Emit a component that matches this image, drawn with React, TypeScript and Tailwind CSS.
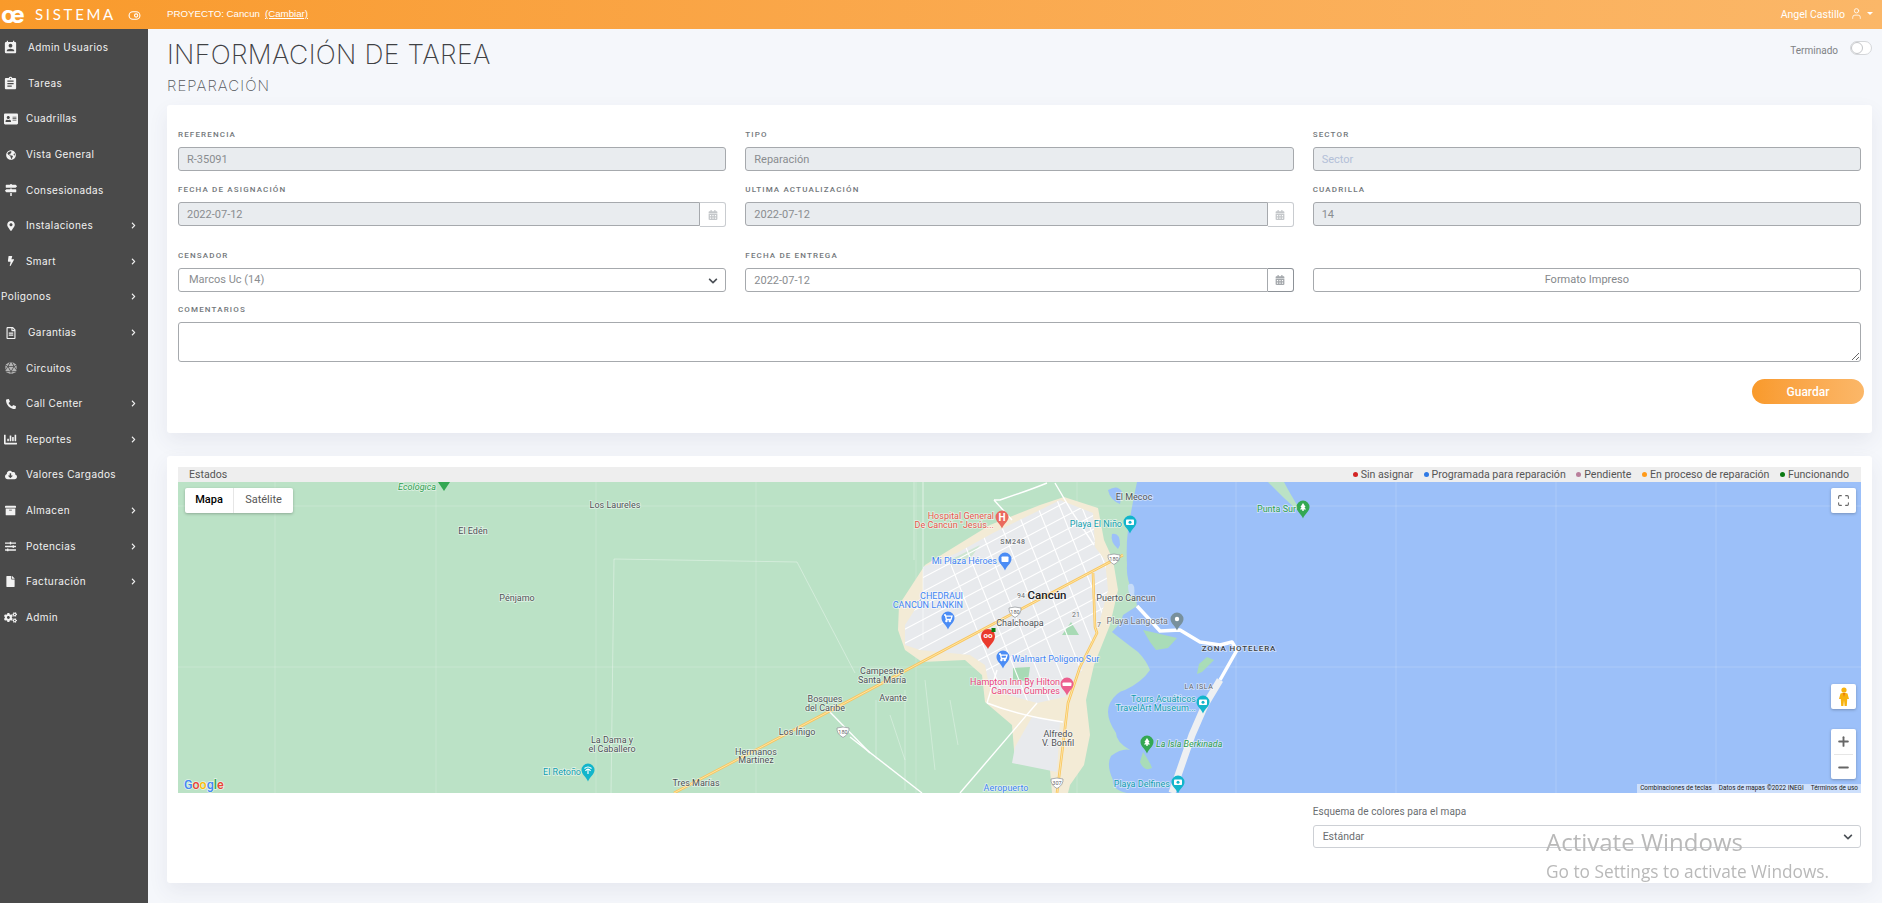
import React from 'react';
import { ToggleRight, User, Maximize, Plus, Minus } from 'lucide-react';
import {
  MdPermContactCalendar,
  MdAssignment,
} from 'react-icons/md';
import {
  FaAddressCard,
  FaGlobeAmericas,
  FaMapSigns,
  FaMapMarkerAlt,
  FaBolt,
  FaRegFileAlt,
  FaDiceD20,
  FaPhoneAlt,
  FaChartBar,
  FaCloudDownloadAlt,
  FaArchive,
  FaSlidersH,
  FaFile,
  FaCogs,
  FaChevronRight,
  FaChevronDown,
  FaCalendarAlt,
} from 'react-icons/fa';

const menu = [
  { label: 'Admin Usuarios', icon: MdPermContactCalendar, size: 15, wide: true },
  { label: 'Tareas', icon: MdAssignment, size: 15, wide: true },
  { label: 'Cuadrillas', icon: FaAddressCard, size: 14 },
  { label: 'Vista General', icon: FaGlobeAmericas, size: 10 },
  { label: 'Consesionadas', icon: FaMapSigns, size: 12 },
  { label: 'Instalaciones', icon: FaMapMarkerAlt, size: 10, arrow: true },
  { label: 'Smart', icon: FaBolt, size: 10, arrow: true },
  { label: 'Poligonos', arrow: true },
  { label: 'Garantias', icon: FaRegFileAlt, size: 12, wide: true, arrow: true },
  { label: 'Circuitos', icon: FaDiceD20, size: 12, muted: true },
  { label: 'Call Center', icon: FaPhoneAlt, size: 10, arrow: true },
  { label: 'Reportes', icon: FaChartBar, size: 13, arrow: true },
  { label: 'Valores Cargados', icon: FaCloudDownloadAlt, size: 12 },
  { label: 'Almacen', icon: FaArchive, size: 11, arrow: true },
  { label: 'Potencias', icon: FaSlidersH, size: 11, arrow: true },
  { label: 'Facturación', icon: FaFile, size: 11, arrow: true },
  { label: 'Admin', icon: FaCogs, size: 13 },
];

const legend = [
  { label: 'Sin asignar', color: 'bg-[#d32424]' },
  { label: 'Programada para reparación', color: 'bg-[#2f7ae5]' },
  { label: 'Pendiente', color: 'bg-[#b97f9b]' },
  { label: 'En proceso de reparación', color: 'bg-[#ff9a1a]' },
  { label: 'Funcionando', color: 'bg-[#0b7a12]' },
];

const Label = ({ children }: { children: React.ReactNode }) => (
  <div className="h-[12px] mb-[7px] pt-[1px] text-[8px] leading-[12px] font-medium uppercase tracking-[1.15px] text-[#72777b]">{children}</div>
);

const inputBase = 'block w-full h-[24px] px-[8px] text-[11px] text-[#8a8d90] border border-[#a6a9ad] rounded-[3px] outline-none placeholder:text-[#b3c0d8]';

const TextField = ({ label, value, placeholder }: { label: string; value?: string; placeholder?: string }) => (
  <div>
    <Label>{label}</Label>
    <input readOnly value={value ?? ''} placeholder={placeholder} className={`${inputBase} bg-[#e9ecef]`} />
  </div>
);

const DateField = ({ label, value, disabled }: { label: string; value: string; disabled?: boolean }) => (
  <div>
    <Label>{label}</Label>
    <div className="flex items-start">
      <input readOnly value={value} className={`${inputBase} flex-1 min-w-0 rounded-r-none ${disabled ? 'bg-[#e9ecef]' : 'bg-white'}`} />
      <div className={`w-[26px] shrink-0 flex items-center justify-center rounded-r-[3px] border border-l-0 ${disabled ? 'h-[25px] border-[#c9ccd0] text-[#c4c7ca]' : 'h-[24px] border-[#8d9298] border-l text-[#a4a8ac]'}`}>
        <FaCalendarAlt size={10} />
      </div>
    </div>
  </div>
);

// calles de la ciudad, se recortan con el poligono urbano
const streetsNE = Array.from({ length: 11 }, (_, i) => {
  const off = (i - 3) * 14;
  return `M860 ${695 - off} L1130 ${552 - off}`;
});
const streetsSE = Array.from({ length: 10 }, (_, i) => {
  const x = 925 + i * 22;
  return `M${x} 500 L${x + 92} 730`;
});

const waterPath =
  'M1137 482 L1861 482 L1861 793 L1127 793 Q1112 790 1113 780 Q1106 765 1111 756 Q1122 748 1130 750 Q1116 742 1116 733 Q1104 715 1110 703 Q1116 692 1125 690 Q1142 682 1150 670 Q1146 660 1138 652 Q1122 640 1112 632 Q1122 622 1123 615 L1137 606 Q1136 596 1132 590 Q1126 578 1127 565 Q1126 545 1128 530 Q1132 505 1137 482 Z';

const urbanPath =
  'M923 567 L957 553 L993 533 L1040 510 L1060 500 L1093 513 L1095 547 L1105 560 L1108 590 L1100 620 L1085 665 L1065 697 L1037 703 L990 690 L985 665 L970 655 L920 650 L905 645 L905 625 L923 597 Z';

type PinProps = { x: number; y: number; color: string; glyph?: string };

const Pin = ({ x, y, color, glyph }: PinProps) => (
  <g transform={`translate(${x} ${y})`}>
    <path d="M0 11.5 C-1.5 7 -6.5 4.5 -6.5 0 A6.5 6.5 0 1 1 6.5 0 C6.5 4.5 1.5 7 0 11.5 Z" fill={color} />
    {glyph === 'H' && (
      <text x="0" y="3.5" textAnchor="middle" fontSize="10" fontWeight="700" fill="#fff">H</text>
    )}
    {glyph === 'box' && <rect x="-3.5" y="-2.5" width="7" height="5.5" rx="0.8" fill="#fff" />}
    {glyph === 'cart' && <path d="M-4 -3 L-2.6 -3 L-1.6 1.5 L3 1.5 L4 -1.8 L-2 -1.8 M-1 3 A0.6 0.6 0 1 0 -1 3.01 M2.4 3 A0.6 0.6 0 1 0 2.4 3.01" stroke="#fff" strokeWidth="1.3" fill="none" />}
    {glyph === 'camera' && (
      <g>
        <rect x="-4" y="-2.5" width="8" height="5.5" rx="0.8" fill="#fff" />
        <circle cx="0" cy="0.2" r="1.5" fill={color} />
      </g>
    )}
    {glyph === 'tree' && <path d="M0 -4 L2.6 0 L1.4 0 L3 2.6 L0.7 2.6 L0.7 4 L-0.7 4 L-0.7 2.6 L-3 2.6 L-1.4 0 L-2.6 0 Z" fill="#fff" />}
    {glyph === 'bed' && <rect x="-4.5" y="-1.5" width="9" height="3.5" rx="0.8" fill="#fff" />}
    {glyph === 'dot' && <circle cx="0" cy="0" r="2.2" fill="#fff" />}
    {glyph === 'palm' && <path d="M0 4 L0 -1 M-3.5 -1.5 Q0 -4.5 3.5 -1.5 M-2.5 1 Q0 -3 2.5 1" stroke="#fff" strokeWidth="1.2" fill="none" />}
  </g>
);

const pins: PinProps[] = [
  { x: 1002, y: 517, color: '#ea6a5e', glyph: 'H' },
  { x: 1005, y: 559, color: '#4b8cf5', glyph: 'box' },
  { x: 948, y: 618, color: '#4b8cf5', glyph: 'cart' },
  { x: 1003, y: 657, color: '#4b8cf5', glyph: 'cart' },
  { x: 1067, y: 684, color: '#ec5f8f', glyph: 'bed' },
  { x: 1130, y: 522, color: '#12b5cb', glyph: 'camera' },
  { x: 1303, y: 507, color: '#34a853', glyph: 'tree' },
  { x: 1177, y: 619, color: '#78909c', glyph: 'dot' },
  { x: 1203, y: 702, color: '#12b5cb', glyph: 'camera' },
  { x: 1147, y: 742, color: '#34a853', glyph: 'tree' },
  { x: 1178, y: 782, color: '#12b5cb', glyph: 'camera' },
  { x: 588, y: 770, color: '#12b5cb', glyph: 'palm' },
];

type MapLabel = { x: number; y: number; t: string; c?: string; a?: 'start' | 'middle' | 'end'; s?: number; w?: number; i?: boolean; ls?: number };

const DARK = '#4f5357';
const BLUE = '#4285f4';
const TEAL = '#129eaf';
const RED = '#e8584c';
const PINK = '#e8457c';
const GREEN = '#2e9e4f';

const mapLabels: MapLabel[] = [
  { x: 436, y: 490, t: 'Ecológica', c: GREEN, a: 'end', i: true },
  { x: 615, y: 508, t: 'Los Laureles', c: DARK, a: 'middle' },
  { x: 473, y: 534, t: 'El Edén', c: DARK, a: 'middle' },
  { x: 517, y: 601, t: 'Pénjamo', c: DARK, a: 'middle' },
  { x: 612, y: 743, t: 'La Dama y', c: DARK, a: 'middle' },
  { x: 612, y: 752, t: 'el Caballero', c: DARK, a: 'middle' },
  { x: 581, y: 775, t: 'El Retoño', c: TEAL, a: 'end' },
  { x: 696, y: 786, t: 'Tres Marías', c: DARK, a: 'middle' },
  { x: 756, y: 755, t: 'Hermanos', c: DARK, a: 'middle' },
  { x: 756, y: 763, t: 'Martínez', c: DARK, a: 'middle' },
  { x: 797, y: 735, t: 'Los Íñigo', c: DARK, a: 'middle' },
  { x: 825, y: 702, t: 'Bosques', c: DARK, a: 'middle' },
  { x: 825, y: 711, t: 'del Caribe', c: DARK, a: 'middle' },
  { x: 882, y: 674, t: 'Campestre', c: DARK, a: 'middle' },
  { x: 882, y: 683, t: 'Santa María', c: DARK, a: 'middle' },
  { x: 893, y: 701, t: 'Avante', c: DARK, a: 'middle' },
  { x: 994, y: 519, t: 'Hospital General', c: RED, a: 'end' },
  { x: 994, y: 528, t: 'De Cancún "Jesús...', c: RED, a: 'end' },
  { x: 1013, y: 544, t: 'SM248', c: '#6b6f73', a: 'middle', s: 7, w: 500, ls: 0.6 },
  { x: 997, y: 564, t: 'Mi Plaza Héroes', c: BLUE, a: 'end' },
  { x: 963, y: 599, t: 'CHEDRAUI', c: BLUE, a: 'end' },
  { x: 963, y: 608, t: 'CANCÚN LANKIN', c: BLUE, a: 'end' },
  { x: 1021, y: 598, t: '94', c: '#6b6f73', a: 'middle', s: 7 },
  { x: 1047, y: 599, t: 'Cancún', c: '#202124', a: 'middle', s: 11.5, w: 500 },
  { x: 1126, y: 601, t: 'Puerto Cancun', c: DARK, a: 'middle' },
  { x: 1020, y: 626, t: 'Chalchoapa', c: DARK, a: 'middle' },
  { x: 1076, y: 617, t: '21', c: '#6b6f73', a: 'middle', s: 7 },
  { x: 1099, y: 627, t: '7', c: '#6b6f73', a: 'middle', s: 7 },
  { x: 1168, y: 624, t: 'Playa Langosta', c: '#70757a', a: 'end' },
  { x: 1012, y: 662, t: 'Walmart Polígono Sur', c: BLUE },
  { x: 1060, y: 685, t: 'Hampton Inn By Hilton', c: PINK, a: 'end' },
  { x: 1060, y: 694, t: 'Cancun Cumbres', c: PINK, a: 'end' },
  { x: 1239, y: 651, t: 'ZONA HOTELERA', c: '#3c4043', a: 'middle', s: 8, w: 500, ls: 0.9 },
  { x: 1199, y: 689, t: 'LA ISLA', c: '#5f6368', a: 'middle', s: 7, ls: 0.6 },
  { x: 1196, y: 702, t: 'Tours Acuáticos', c: TEAL, a: 'end' },
  { x: 1196, y: 711, t: 'TravelArt Museum...', c: TEAL, a: 'end' },
  { x: 1156, y: 747, t: 'La Isla Berkinada', c: GREEN, i: true },
  { x: 1170, y: 787, t: 'Playa Delfines', c: TEAL, a: 'end' },
  { x: 1006, y: 791, t: 'Aeropuerto', c: BLUE, a: 'middle' },
  { x: 1058, y: 737, t: 'Alfredo', c: DARK, a: 'middle' },
  { x: 1058, y: 746, t: 'V. Bonfil', c: DARK, a: 'middle' },
  { x: 1134, y: 500, t: 'El Mecoc', c: DARK, a: 'middle' },
  { x: 1122, y: 527, t: 'Playa El Niño', c: TEAL, a: 'end' },
  { x: 1296, y: 512, t: 'Punta Sur', c: GREEN, a: 'end' },
];

const Shield = ({ x, y, n }: { x: number; y: number; n: string }) => (
  <g transform={`translate(${x} ${y})`}>
    <path d="M-6 -4 Q0 -6 6 -4 Q6.5 2 0 5.5 Q-6.5 2 -6 -4 Z" fill="#fff" stroke="#8a8e92" strokeWidth="0.7" />
    <text x="0" y="1.8" textAnchor="middle" fontSize="5.5" fill="#5f6368">{n}</text>
  </g>
);

const MapDrawing = () => (
  <svg viewBox="178 482 1683 311" className="block w-full h-full font-[Roboto,sans-serif]">
    <defs>
      <clipPath id="urban">
        <path d={urbanPath} />
      </clipPath>
    </defs>
    <rect x="178" y="482" width="1683" height="311" fill="#bbe2c6" />
    <path d={waterPath} fill="#9cc0f9" />
    <path d="M1268 482 L1284 482 Q1290 494 1304 516 Q1285 500 1268 482 Z" fill="#bbe2c6" />
    <path d="M1108 490 Q1118 484 1122 492 L1120 504 Q1110 500 1108 490 Z" fill="#9cc0f9" />
    <path d="M1112 534 Q1120 532 1120 545 L1118 549 Q1110 542 1112 534 Z" fill="#9cc0f9" />

    {/* cuadricula de mosaicos */}
    {[275, 436, 596, 756, 916, 1077, 1236, 1396, 1556, 1716].map((x) => (
      <line key={x} x1={x} y1="482" x2={x} y2="793" stroke="#fff" strokeOpacity="0.18" />
    ))}
    {[506, 667].map((y) => (
      <line key={y} x1="178" y1={y} x2="1861" y2={y} stroke="#fff" strokeOpacity="0.18" />
    ))}

    {/* zona costera beige */}
    <path d="M899 605 L925 565 L990 525 L1040 505 L1064 497 L1098 508 L1104 540 L1113 560 L1118 590 L1110 625 L1094 665 L1086 700 L1090 735 L1084 765 L1070 785 L1068 793 L1052 793 L1050 770 L1015 762 L1012 725 L985 702 L982 675 L965 660 L922 662 L905 650 L898 630 Z" fill="#f3ebd6" />
    <path d={urbanPath} fill="#e8eaed" />
    <path d="M1032 717 L1060 722 L1057 772 L1012 763 L1015 747 Z" fill="#e8eaed" />
    <path d="M1013 668 L1030 667 L1028 681 L1013 680 Z" fill="#a8dab5" />
    <path d="M1071 622 L1079 635 L1062 635 Z" fill="#a8dab5" />
    <path d="M950 560 L980 545 L972 556 L950 566 Z" fill="#cfe6d2" />

    <g clipPath="url(#urban)" stroke="#fff" strokeWidth="1.1" fill="none">
      {streetsNE.map((d) => <path key={d} d={d} />)}
      {streetsSE.map((d) => <path key={d} d={d} />)}
    </g>

    {/* islas y barra hotelera */}
    <path d="M1143 630 L1160 634 L1177 638 L1168 648 L1156 650 L1150 642 Z" fill="#a9dcb8" />
    <path d="M1207 657 L1214 660 L1202 672 L1197 674 L1199 664 Z" fill="#a9dcb8" />
    <path d="M1143 752 Q1150 762 1152 768 Q1144 772 1140 762 Z" fill="#a9dcb8" />
    <path d="M1128 585 Q1136 580 1134 596 Q1128 598 1128 585 Z" fill="#c7dcf8" />
    <path d="M1137 606 L1150 620 L1160 631 L1180 630 L1200 642 L1220 645 L1232 642 L1237 650 L1220 680" stroke="#fff" strokeWidth="3.5" fill="none" strokeLinejoin="round" />
    <path d="M1220 680 L1205 705 L1192 735 L1172 793" stroke="#eef0f2" strokeWidth="7" fill="none" />

    {/* caminos blancos */}
    <g stroke="#fff" fill="none">
      <path d="M826 708 L870 753" strokeWidth="1.4" />
      <path d="M850 737 L922 793" strokeWidth="1.4" />
      <path d="M960 793 L1037 703" strokeWidth="1.4" />
      <path d="M987 703 Q1020 716 1063 722" strokeWidth="1.4" />
      <path d="M987 703 L997 670" strokeWidth="1.4" />
      <path d="M994 500 L1000 500 Q1030 490 1047 483" strokeWidth="1.4" />
      <path d="M994 500 L1012 520" strokeWidth="1.4" />
      <path d="M1055 483 L1072 512 L1094 545" strokeWidth="1.4" />
      <path d="M923 482 L923 640" strokeWidth="0.8" strokeOpacity="0.7" />
      <path d="M914 482 L914 560" strokeWidth="0.7" strokeOpacity="0.5" />
      <path d="M614 559 L797 562 L855 673" strokeWidth="0.7" strokeOpacity="0.5" />
      <path d="M614 559 L611 793" strokeWidth="0.7" strokeOpacity="0.5" />
      <path d="M905 690 L905 790 M876 700 L876 760 M890 715 L905 760 M925 680 L935 770 M950 700 L958 745" strokeWidth="0.7" strokeOpacity="0.45" />
    </g>

    {/* carreteras */}
    <g fill="none" strokeLinejoin="round">
      <path d="M674 793 L826 713 L963 640 L1123 555" stroke="#f9c65e" strokeWidth="2.6" />
      <path d="M674 793 L826 713 L963 640 L1123 555" stroke="#fff0c4" strokeWidth="0.7" />
      <path d="M1093 573 L1095 627 L1097 633 L1080 667 L1068 703 L1062 753 L1057 793" stroke="#f9c65e" strokeWidth="2.6" />
      <path d="M1093 573 L1095 627 L1097 633 L1080 667 L1068 703 L1062 753 L1057 793" stroke="#fff0c4" strokeWidth="0.7" />
    </g>
    <Shield x={1114} y={559} n="180" />
    <Shield x={1015} y={612} n="180" />
    <Shield x={1057} y={783} n="307" />
    <Shield x={843} y={732} n="180" />

    <polygon points="438,482 450,482 444,491" fill="#34a853" />
    {pins.map((p) => <Pin key={`${p.x}-${p.y}`} {...p} />)}

    {/* marcador de la tarea */}
    <g transform="translate(988 637)">
      <path d="M0 12 C-1.5 8 -7 5 -7 -1 A7 7 0 1 1 7 -1 C7 5 1.5 8 0 12 Z" fill="#ea3a2d" />
      <text x="0" y="1" textAnchor="middle" fontSize="8" fontWeight="700" fill="#fff">oo</text>
      <rect x="3.5" y="-9" width="4" height="4" fill="#0b7a12" />
    </g>

    {mapLabels.map((l) => (
      <text
        key={l.t}
        x={l.x}
        y={l.y}
        textAnchor={l.a ?? 'start'}
        fontSize={l.s ?? 9}
        fontWeight={l.w ?? 400}
        fontStyle={l.i ? 'italic' : 'normal'}
        letterSpacing={l.ls ?? 0}
        fill={l.c}
        stroke="#ffffff"
        strokeOpacity="0.55"
        strokeWidth="1.6"
        paintOrder="stroke"
      >
        {l.t}
      </text>
    ))}

    <text x="184" y="789" fontSize="12.5" fontWeight="500" stroke="#fff" strokeOpacity="0.6" strokeWidth="1.5" paintOrder="stroke">
      <tspan fill="#4285f4">G</tspan>
      <tspan fill="#ea4335">o</tspan>
      <tspan fill="#fbbc05">o</tspan>
      <tspan fill="#4285f4">g</tspan>
      <tspan fill="#34a853">l</tspan>
      <tspan fill="#ea4335">e</tspan>
    </text>
  </svg>
);

const App = () => {
  return (
    <div className="h-[903px] w-full overflow-hidden flex flex-col bg-[#f5f7fb] font-[Roboto,sans-serif]">
      <header className="h-[29px] shrink-0 flex items-center text-white bg-gradient-to-r from-[#f99a2a] to-[#fbb768]">
        <div className="w-[167px] shrink-0 flex items-center">
          <span className="w-[35px] pl-[1px] text-[24px] leading-[24px] font-bold tracking-[-1px] font-[Inter,sans-serif]">œ</span>
          <span className="text-[15px] font-normal tracking-[2.7px] font-[Lato,sans-serif]">SISTEMA</span>
          <ToggleRight size={13} className="ml-[12px] mt-[2px]" />
        </div>
        <div className="text-[9.7px] font-['Liberation_Sans',sans-serif]">PROYECTO: Cancun</div>
        <a className="ml-[5px] text-[9.7px] underline font-['Liberation_Sans',sans-serif]">(Cambiar)</a>
        <div className="ml-auto flex items-center pr-[9px]">
          <span className="text-[10.5px]">Angel Castillo</span>
          <User size={13} className="ml-[5px] mb-[2px]" strokeWidth={1.5} />
          <span className="ml-[4px] mb-[3px] w-0 h-0 border-x-[3px] border-x-transparent border-t-[3px] border-t-white" />
        </div>
      </header>

      <div className="flex-1 flex min-h-0">
        <aside className="w-[148px] shrink-0 bg-[#4a4a4a] pt-[1px] text-white font-[Inter,sans-serif]">
          {menu.map((m) => {
            const Icon = m.icon;
            return (
              <div key={m.label} className="h-[35.6px] flex items-center text-[10px] tracking-[0.4px] text-[#f2f2f2]">
                {Icon ? (
                  <span className={`w-[21px] flex justify-center shrink-0 ${m.muted ? 'text-[#b5b5b5]' : ''}`}>
                    <Icon size={m.size} />
                  </span>
                ) : (
                  <span className="w-[1px] shrink-0" />
                )}
                <span className={Icon ? (m.wide ? 'ml-[7px]' : 'ml-[5px]') : ''}>{m.label}</span>
                {m.arrow && <FaChevronRight size={7} className="ml-auto mr-[11px]" />}
              </div>
            );
          })}
        </aside>

        <main className="flex-1 min-w-0 pl-[19px] pr-[10px]">
          <div className="flex justify-between pt-[9px] mb-[10px]">
            <div>
              <h1 className="text-[26.5px] leading-[32px] font-extralight tracking-[0.35px] text-[#3f4144] font-[Inter,sans-serif]">INFORMACIÓN DE TAREA</h1>
              <h2 className="mt-[7px] text-[15px] leading-[18px] font-extralight tracking-[1.05px] text-[#55585c] font-[Inter,sans-serif]">REPARACIÓN</h2>
            </div>
            <div className="flex items-center h-[24px]">
              <span className="text-[10px] text-[#7f8285] mt-[1px]">Terminado</span>
              <div className="relative ml-[12px] w-[22px] h-[14px] rounded-full border border-[#d5d7da] bg-white mb-[5px]">
                <div className="absolute left-0 top-0 w-[12px] h-[12px] rounded-full bg-white border border-[#c4c6c9]" />
              </div>
            </div>
          </div>

          <section className="bg-white rounded-[3px] h-[328px] pt-[23px] px-[11px] shadow-[0_8px_20px_rgba(60,70,100,0.08)]">
            <div className="grid grid-cols-3 gap-x-[19px]">
              <div className="mb-[12px]"><TextField label="Referencia" value="R-35091" /></div>
              <div className="mb-[12px]"><TextField label="Tipo" value="Reparación" /></div>
              <div className="mb-[12px]"><TextField label="Sector" placeholder="Sector" /></div>
              <div className="mb-[22px]"><DateField label="Fecha de asignación" value="2022-07-12" disabled /></div>
              <div className="mb-[22px]"><DateField label="Ultima actualización" value="2022-07-12" disabled /></div>
              <div className="mb-[22px]"><TextField label="Cuadrilla" value="14" /></div>
              <div className="mb-[11px]">
                <Label>Censador</Label>
                <div className="relative">
                  <select className={`${inputBase} appearance-none bg-white pl-[10px]`} defaultValue="14">
                    <option value="14">Marcos Uc (14)</option>
                  </select>
                  <FaChevronDown size={10} className="absolute right-[8px] top-[8px] text-[#4a4f55]" />
                </div>
              </div>
              <div className="mb-[11px]"><DateField label="Fecha de entrega" value="2022-07-12" /></div>
              <div className="mb-[11px] pt-[19px]">
                <button className="block w-full h-[24px] text-[11px] text-[#85888b] bg-white border border-[#a6a9ad] rounded-[3px]">Formato Impreso</button>
              </div>
            </div>
            <Label>Comentarios</Label>
            <textarea className="block w-full h-[40px] border border-[#a6a9ad] rounded-[3px] outline-none bg-white" />
            <div className="flex justify-end mt-[17px]">
              <button className="w-[112px] h-[25px] -mr-[3px] rounded-full text-white text-[12px] font-medium bg-gradient-to-r from-[#f99a2a] to-[#fbb768]">Guardar</button>
            </div>
          </section>

          <section className="mt-[23px] bg-white rounded-[3px] h-[427px] pt-[11px] px-[11px] shadow-[0_8px_20px_rgba(60,70,100,0.08)]">
            <div className="h-[15px] flex items-center justify-between pl-[11px] pr-[12px] bg-[#eeeeee] text-[10.6px] text-[#555]">
              <span>Estados</span>
              <div className="flex items-center gap-[10.5px]">
                {legend.map((l) => (
                  <span key={l.label} className="flex items-center gap-[3px]">
                    <span className={`w-[5px] h-[5px] rounded-full ${l.color}`} />
                    {l.label}
                  </span>
                ))}
              </div>
            </div>

            <div className="relative h-[311px] overflow-hidden">
              <MapDrawing />
              <div className="absolute left-[7px] top-[6px] h-[25px] flex bg-white rounded-[2px] shadow-[0_1px_3px_rgba(0,0,0,0.25)] text-[11px]">
                <span className="w-[49px] flex items-center justify-center text-black font-medium border-r border-[#e6e6e6]">Mapa</span>
                <span className="w-[59px] flex items-center justify-center text-[#565656]">Satélite</span>
              </div>
              <div className="absolute right-[5px] top-[6px] w-[25px] h-[25px] bg-white rounded-[2px] shadow-[0_1px_3px_rgba(0,0,0,0.25)] flex items-center justify-center text-[#666]">
                <Maximize size={13} strokeWidth={2} />
              </div>
              <div className="absolute right-[5px] top-[202px] w-[25px] h-[25px] bg-white rounded-[2px] shadow-[0_1px_3px_rgba(0,0,0,0.25)] flex items-center justify-center">
                <svg width="12" height="20" viewBox="0 0 12 20">
                  <circle cx="6" cy="3" r="2.6" fill="#f7b20f" />
                  <path d="M2.5 6.5 Q6 5 9.5 6.5 L11 12 L9.2 12 L8.8 19 L6.6 19 L6 13 L5.4 19 L3.2 19 L2.8 12 L1 12 Z" fill="#f7b20f" />
                  <path d="M5 6 L6 10 L7 6 Z" fill="#e8710a" />
                </svg>
              </div>
              <div className="absolute right-[5px] top-[247px] w-[25px] h-[50px] bg-white rounded-[2px] shadow-[0_1px_3px_rgba(0,0,0,0.25)] flex flex-col items-center text-[#666]">
                <div className="h-[25px] flex items-center"><Plus size={15} strokeWidth={3} /></div>
                <div className="w-[19px] h-[1px] bg-[#e6e6e6]" />
                <div className="h-[24px] flex items-center"><Minus size={15} strokeWidth={3} /></div>
              </div>
              <div className="absolute right-0 bottom-0 h-[9px] flex items-center gap-[7px] px-[3px] bg-white/50 text-[6.4px] leading-[9px] text-[#222] whitespace-nowrap">
                <span>Combinaciones de teclas</span>
                <span>Datos de mapas ©2022 INEGI</span>
                <span>Términos de uso</span>
              </div>
            </div>

            <div className="grid grid-cols-3 gap-x-[19px] pt-[12px]">
              <div className="col-start-3">
                <div className="h-[14px] text-[10px] leading-[14px] text-[#6a6d70] tracking-[0.1px]">Esquema de colores para el mapa</div>
                <div className="relative mt-[6px]">
                  <select className="block w-full h-[23px] px-[9px] appearance-none bg-white text-[10.5px] text-[#6a6d70] border border-[#cdd0d5] rounded-[3px] outline-none" defaultValue="std">
                    <option value="std">Estándar</option>
                  </select>
                  <FaChevronDown size={10} className="absolute right-[8px] top-[7px] text-[#4a4f55]" />
                </div>
              </div>
            </div>
          </section>
        </main>
      </div>

      {/* marca de agua de windows */}
      <div className="fixed left-[1546px] top-[826px] pointer-events-none text-[#b9b9b9] font-['Open_Sans',sans-serif]">
        <div className="text-[24px] leading-[32px] whitespace-nowrap">Activate Windows</div>
        <div className="mt-[3px] text-[17.3px] leading-[22px] whitespace-nowrap">Go to Settings to activate Windows.</div>
      </div>
    </div>
  );
};

export default App;
